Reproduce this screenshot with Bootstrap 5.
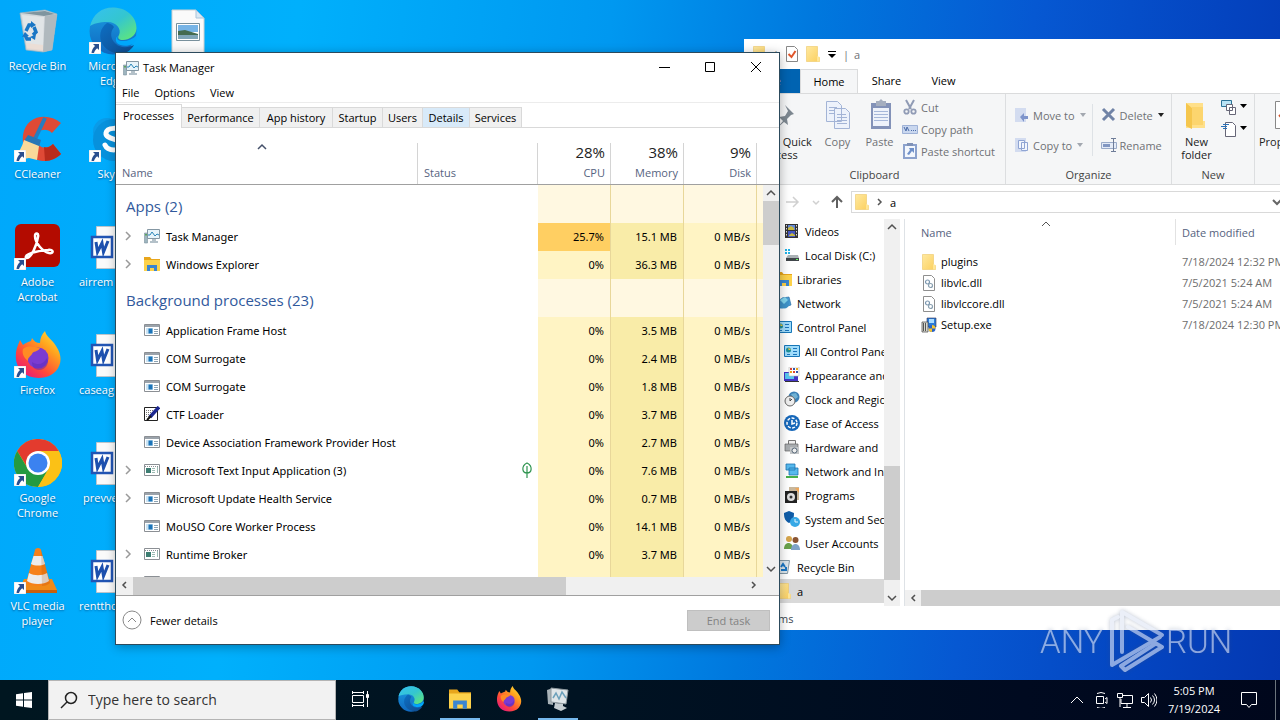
<!DOCTYPE html>
<html lang="en">
<head>
<meta charset="utf-8">
<meta name="viewport" content="width=device-width, initial-scale=1">
<title>Desktop</title>
<link href="https://cdn.jsdelivr.net/npm/bootstrap@5.3.0/dist/css/bootstrap.min.css" rel="stylesheet">
<script src="https://cdn.jsdelivr.net/npm/bootstrap@5.3.0/dist/js/bootstrap.bundle.min.js"></script>
<style>
body{font-family:"Open Sans","Noto Sans",sans-serif;font-size:11px;line-height:15px;color:#000}
button,input{font:inherit;color:inherit}
button{border:0;background:none;padding:0}
svg{flex:none;display:block}
.i16{width:16px;height:16px}
.desk{background:linear-gradient(97deg,#00a8fb 0%,#00b0fc 22%,#0098f0 45%,#0078de 60%,#0658d2 76%,#0444c0 90%,#0438b2 100%)}
/* desktop shortcuts */
.shortcuts{display:grid;grid-auto-flow:column;grid-template-rows:repeat(6,108px);grid-auto-columns:75px}
.shortcut{color:#fff;text-decoration:none;text-align:center;padding-top:7px;text-shadow:0 1px 2px rgba(0,40,90,.6)}
.shortcut .pic{position:relative;width:48px;height:48px;margin:0 auto 3px}
.shortcut .pic svg{width:48px;height:48px}
.shortcut .pic svg.link-mark{position:absolute;left:0;bottom:1px;width:12px;height:12px}
.cut-label{text-align:left;padding-left:4px}
/* windows */
.win{position:absolute;background:#fff}
.tm{left:116px;top:52px;width:664px;height:593px;border:1px solid #2c4a5c;border-left:0;z-index:2;box-shadow:-1px 0 0 #2c4a5c,0 2px 10px rgba(0,0,0,.3)}
.tm-title{height:29px;padding-left:7px}
.tm-title svg.ctl{width:46px;height:29px}
.tm-menu{height:22px;padding-left:6px;gap:15px;border-bottom:1px solid #ececec}
.tm-tabs{height:25px;border-bottom:1px solid #d9d9d9;padding-top:2px}
.tm-tabs button{height:20px;background:#f0f0f0;border:1px solid #d9d9d9;border-left:0;border-bottom:0}
.tm-tabs button.active{height:24px;width:66px;background:#fff;margin-bottom:-1px;padding-bottom:3px}
.tm-tabs button.hot{background:#d8eaf9}
.procs{width:647px;table-layout:fixed;border-collapse:separate;border-spacing:0}
.procs td,.procs th{padding:0 6px;font-weight:400;vertical-align:middle;white-space:nowrap}
.procs thead th{height:57px;border-bottom:1px solid #a0a0a0;color:#566380;vertical-align:bottom;padding-bottom:4px;background:linear-gradient(#d4d4d4,#d4d4d4) right bottom/1px 41px no-repeat}
.procs thead th:last-child{background:none}
.procs thead b{display:block;font-weight:400;font-size:15px;line-height:20px;color:#222;padding-bottom:3px}
.procs tbody td{height:28px;padding-bottom:2px;font-family:"Noto Sans","Open Sans",sans-serif}
.procs .num{text-align:right;background:#fff4c4;border-right:1px solid #e8d79a}
.procs .mem{background:#f9eca8}
.procs .hot{background:#ffcf62}
.procs .fill{background:#fff4c4}
.procs .group td{height:38px}
.procs .group .num,.procs .group .fill{background:#fff8e1}
.procs .group th{font-size:15px;color:#31599c;padding:4px 10px 0;height:38px}
.pname{display:flex;align-items:center;gap:6px}
.pname .chev{width:16px;height:16px}
.sb{background:#f0f0f0}
.sb-thumb{background:#cdcdcd}
.sb-end{margin-top:10px}
.tm-sbhead{height:57px;border-bottom:1px solid #a0a0a0}
.tm-foot{height:49px;flex:none;border-top:1px solid #a0a0a0;padding:0 9px 0 6px}
.tm-hscroll{height:18px;flex:none}
.end-btn{width:83px;height:21px;background:#ccc;border:1px solid #bfbfbf;color:#838383}
/* explorer */
.ex{left:744px;top:39px;width:720px;height:591px}
.ex-title{height:30px;padding-left:8px;gap:5px}
.ex-tabs{height:24px}
.ex-tabs button{width:57px;margin-bottom:-1px;padding-bottom:2px}
.ex-tabs .file{background:#0063b1;color:#fff;margin-bottom:0;width:56px}
.ex-tabs .active{background:#f5f6f7;border:1px solid #dadbdc;border-bottom:0;width:58px}
.ribbon{height:92px;background:#f5f6f7;border-top:1px solid #dadbdc;border-bottom:1px solid #dadbdc}
.rg{padding:2px 0 2px;border-right:1px solid #dcdee0}
.rg-label{color:#444}
.big{line-height:13px;display:flex;flex-direction:column;align-items:center;color:#222;padding-top:3px}
.big svg{width:32px;height:34px;margin-bottom:2px}
.small-btn{display:flex;align-items:center;gap:3px;height:22px}
.dim{color:#6f7175}
.addr{height:34px;padding-left:35px}
.addr-box{height:22px;border:1px solid #d9d9d9;padding-left:2px;gap:5px}
.nav-pane{width:140px;flex:none;overflow:hidden}
.nav-pane a{display:flex;align-items:center;gap:5px;height:24px;padding-left:32px;color:#000;text-decoration:none;white-space:nowrap}
.nav-pane a.lv2{padding-left:40px}
.nav-pane a.sel{background:#d9d9d9}
.files{table-layout:fixed;width:600px}
.files th{font-weight:400;color:#566380;height:32px;padding:6px 0 0;vertical-align:top}
.files th:first-child{background:linear-gradient(#e2e2e2,#e2e2e2) right top/1px 26px no-repeat}
.files .when{padding-left:6px}
.files td{height:21px;padding:0;white-space:nowrap}
.files td.when{color:#6d6d6d}
.sort{margin:-5px 0 0 88px}
.ex-status{height:24px;color:#3c4650;padding-left:12px}
/* taskbar */
.bar{height:40px;background:linear-gradient(90deg,#001620,#001322 45%,#000a20 80%,#00071c)}
.bar .search{width:288px;height:40px;background:#f2f2f2;border:1px solid #b4b4b4;padding-left:10px;gap:9px}
.bar .search input{border:0;background:none;outline:0;font-size:14px;line-height:20px;width:230px;padding:0}
.bar .search input::placeholder{color:#333;opacity:1}
.app{width:40px;height:40px;margin-right:9px;border-bottom:2px solid transparent;display:flex;align-items:center;justify-content:center}
.app.tview{margin-right:11px}
.app svg{width:26px;height:26px}
.app.on{border-color:#76b9ed}
.clock{width:66px;line-height:18px;color:#fff}
.anyrun{position:absolute;left:1034px;top:606px;width:200px;height:68px;z-index:3;opacity:.62;filter:drop-shadow(0 0 2px rgba(60,80,120,.55))}
</style>
</head>
<body>
<svg width="0" height="0" class="position-absolute" aria-hidden="true">
<defs>
<linearGradient id="gEdge" x1="0" y1="0" x2="1" y2="1"><stop offset="0" stop-color="#35c1f1"/><stop offset=".5" stop-color="#34c6cf"/><stop offset="1" stop-color="#66eb6e"/></linearGradient>
<linearGradient id="gEdge2" x1="0" y1="0" x2="1" y2="1"><stop offset="0" stop-color="#0c6fc4"/><stop offset="1" stop-color="#114a8b"/></linearGradient>
<linearGradient id="gEdge3" x1="0" y1="0" x2="0" y2="1"><stop offset="0" stop-color="#1b9de2"/><stop offset="1" stop-color="#0f68c0"/></linearGradient>
<linearGradient id="gFox" x1="1" y1="0" x2=".2" y2="1"><stop offset="0" stop-color="#ffec3e"/><stop offset=".35" stop-color="#ffa41e"/><stop offset=".7" stop-color="#ff4a38"/><stop offset="1" stop-color="#e5177f"/></linearGradient>
<linearGradient id="gFold" x1="0" y1="0" x2="1" y2="1"><stop offset="0" stop-color="#ffe9a0"/><stop offset="1" stop-color="#fbcf5d"/></linearGradient>
<symbol id="mark" viewBox="0 0 12 12"><path fill="#fff" stroke="#bbb" stroke-width=".4" d="M0 0h12v12H0z"/><path fill="#2a4f8f" d="M4 2h6v6L8.200 6.200C6.500 7.500 5.500 9 5 11H2.500C2.600 8.500 4 6 6 4z"/></symbol>
<symbol id="bin" viewBox="0 0 48 48"><path fill="#d0d6da" stroke="#9fb2bc" stroke-width=".7" d="M6 6l25-3 12 4-5 36-9 2-17-2z"/><path fill="#b0b9be" d="M31 9l12-2-5 36-9 2z"/><path fill="#7f959f" d="M8 6l23-2 10 3-11 2z"/><path fill="#eceff0" opacity=".6" d="M8 8l22 2-1 33-16-2z"/><path fill="#f1d9cb" opacity=".6" d="M12 36l17 2v6l-16-2z"/><path fill="none" stroke="#1976c5" stroke-width="3.500" d="M12 24l3-6h3M20 20l2 5-3 3M17 32h-4l-2-4"/><path fill="#1976c5" d="M17 14l5 4-5 3zM22 27l-1 6-5-3zM8 30l3-5 4 4z"/></symbol>
<symbol id="edge" viewBox="0 0 48 48"><circle cx="24" cy="24" r="23.500" fill="url(#gEdge3)"/><path fill="url(#gEdge)" d="M1 19C4 7 13 0 25 .500c14 .500 23 11 22.500 21C47 29 40 33 34 33c-4 0-6-2-4-5 3-6-3-13-11-13C10 15 4 17 1 19z"/><path fill="url(#gEdge2)" d="M18 16c-7 5-9 14-4 22 4 6 12 9 19 9 5-1 10-5 12-9-6 3-14 3-18-1-6-5-6-12-2-17-2-3-5-4-7-4z"/><path fill="#00a8fb" d="M29 29c-2 3 0 5 5 5 5 0 10-2 14-6 0 4-1 6-4 9-6 3-13 2-16-1-2-3-1-6 1-7z"/></symbol>
<symbol id="pic" viewBox="0 0 48 48"><path fill="#fafafa" stroke="#d0d0d0" d="M8 3h24l8 8v35H8z"/><path fill="#d8e8f4" stroke="#a9c4da" d="M32 3v8h8z"/><path fill="#fff" stroke="#78909c" d="M12.500 16.500h23v17h-23z"/><path fill="#77b4e6" d="M14 18h20v7H14z"/><path fill="#446b50" d="M14 24l7-1 13 4v2H14z"/><path fill="#7fa5b7" d="M14 28h20v4H14z"/></symbol>
<symbol id="cc" viewBox="0 0 48 48"><path fill="#df4a36" d="M47 8C34-3 12 0 9 20c-2 17 10 26 22 26 6 0 12-3 16-7l-8-10c-7 7-17 3-17-6 0-8 10-11 16-5z"/><path fill="#b82c1c" d="M31 46c6 0 12-3 16-7l-8-10c-3 3-6 4-9 3z"/><path stroke="#267dc0" stroke-width="4" d="M31 3L20 26"/><path fill="#2876b6" d="M14 20l13 5-2 7-15-6z"/><path fill="#f9d99a" d="M10 25l15 6-2 14-8-2-6 1-8-3c4-4 7-9 9-16z"/></symbol>
<symbol id="skype" viewBox="0 0 48 48"><circle cx="18" cy="17" r="14" fill="#0a9be8"/><circle cx="25" cy="25" r="21" fill="#0791dc"/><path fill="none" stroke="#fff" stroke-width="5" stroke-linecap="round" d="M33 17c-2-5-15-5-16 1-1 7 16 5 16 12 0 6-14 7-17 0"/></symbol>
<symbol id="acro" viewBox="0 0 48 48"><rect x="1" y="1" width="45" height="43" rx="6" fill="#b30b00"/><path fill="none" stroke="#fff" stroke-width="2.500" d="M12 35c-2-4 10-7 22-8 6-1 6 4 1 3-6-1-14-10-14-17 0-4 4-3 3 1-1 8-7 22-12 21z"/></symbol>
<symbol id="word" viewBox="0 0 48 48"><path fill="#fafafa" stroke="#bcc5cc" d="M7.500 3.500h24l7 8v34h-31z"/><path fill="#fff" stroke="#2255b4" stroke-width="2.500" d="M3 14h20v20H3z"/><path fill="none" stroke="#1d50ae" stroke-width="3" d="M7 19l1.500 10L13 20l1.500 9L19 18"/></symbol>
<symbol id="fox" viewBox="0 0 48 48"><path fill="url(#gFox)" d="M26 12c0-5 2-9 5-12 1 6 8 9 11 15 7 10 5 19 0 25-8 9-25 9-34 1C0 33 1 21 4 14l2-5 3 5c2-2 5-3 8-4l1-3c2 3 4 5 8 5z"/><circle cx="24" cy="27" r="10.500" fill="#7b3bd2"/><path fill="#ff8b24" d="M9 18c5-4 11-2 17-1-2 4-7 3-8 6-1 2-5 4-4 7-5-4-6-8-5-12z"/><path fill="#5a2cb5" d="M18 31c6 4 12 2 15-4 3 6-2 12-8 12-4 0-7-3-7-8z" opacity=".5"/></symbol>
<symbol id="chrome" viewBox="0 0 48 48"><circle cx="24" cy="24" r="24" fill="#fbc116"/><path fill="#e33b2e" d="M3.200 12A24 24 0 0 1 44.800 12H24L15 31z"/><path fill="#249a41" d="M3.200 12A24 24 0 0 0 24 48l10.500-18H14z"/><path fill="#fbc116" d="M24 12h20.800A24 24 0 0 1 24 48l10.500-18z"/><circle cx="24" cy="24" r="12" fill="#fff"/><circle cx="24" cy="24" r="9.500" fill="#3b82f0"/></symbol>
<symbol id="vlc" viewBox="0 0 48 48"><path fill="#f08a18" d="M10 32h28l5 11v3H5v-3z"/><path fill="#c8600c" d="M5 43h38v3H5z"/><path fill="#f6811a" d="M24 1c2 0 3 1 3 2l9 33c-4 4-20 4-24 0L21 3c0-1 1-2 3-2z"/><path fill="#ececec" d="M19.500 9h9l2.500 8c-4 2-10 2-14 0zM15 26c5 3 13 3 18 0l2 8c-5 4-17 4-22 0z"/><path fill="#a84a00" d="M27 3l9 33c-2 2-5 3-8 3z" opacity=".2"/></symbol>
<symbol id="tm" viewBox="0 0 16 16"><path fill="#9eb5bf" stroke="#7b929e" stroke-width=".6" d="M.500 5h3v10h-3z"/><path fill="#5aa65e" d="M1 6h2v1.500H1z"/><path fill="#e6f3fa" stroke="#8497a3" d="M3.500 1.500h12v9h-12z"/><path fill="none" stroke="#2a86b8" d="M4 7h2l2-3 3 4 2-2 2 1"/><path fill="#b4c1c9" d="M8 11h4v2h2v2H6v-2h2z"/></symbol>
<symbol id="explorer" viewBox="0 0 16 16"><path fill="#e8a61c" d="M0 1h6l1.500 2H16v3H0z"/><path fill="#fdd24b" d="M0 4h16v11H0z"/><path fill="#3a85d0" d="M3 9h10v6h-3v-3H6v3H3z"/></symbol>
<symbol id="exe" viewBox="0 0 16 16"><path fill="#fff" stroke="#8b8f94" d="M.500 2.500h15v11H.500z"/><path fill="#9ba3ab" d="M1 3h14v2H1z"/><path fill="#cbe4f4" d="M2 6h7v6H2z"/><path fill="#1c74b8" d="M4.500 6.500h4v5h-4z"/><path stroke="#8da4b4" d="M10 7.500h4M10 9.500h4M10 11.500h4"/></symbol>
<symbol id="uwp" viewBox="0 0 16 16"><path fill="#fff" stroke="#8b8f94" d="M.500 2.500h15v11H.500z"/><path stroke="#8b8f94" stroke-dasharray="1 1" d="M1 4.500h14"/><path fill="#3c7d72" d="M2 6h5v5H2z"/><path stroke="#9cbcb4" d="M8 6.500h3M8 8.500h3M8 10.500h3M13.500 5v6"/></symbol>
<symbol id="ctf" viewBox="0 0 16 16"><path fill="#fff" stroke="#222" d="M.500 1.500h13v13H.500z"/><path stroke="#777" stroke-dasharray="1 1" d="M2 4.500h9M2 6.500h8M2 8.500h5M2 10.500h4"/><path stroke="#1c2890" stroke-width="3.500" d="M15 1L6 11"/><path stroke="#111" stroke-width="2" d="M7 10l-4 4"/></symbol>
<symbol id="right" viewBox="0 0 16 16"><path fill="none" stroke="#9a9a9a" stroke-width="1.500" d="M4 4l4 4-4 4"/></symbol>
<symbol id="aU" viewBox="0 0 16 16"><path fill="none" stroke="#505050" stroke-width="1.500" d="M4 10l4-4 4 4"/></symbol>
<symbol id="aD" viewBox="0 0 16 16"><path fill="none" stroke="#505050" stroke-width="1.500" d="M4 6l4 4 4-4"/></symbol>
<symbol id="aL" viewBox="0 0 16 16"><path fill="none" stroke="#505050" stroke-width="1.500" d="M10 5L7 8l3 3"/></symbol>
<symbol id="aR" viewBox="0 0 16 16"><path fill="none" stroke="#505050" stroke-width="1.500" d="M5 5l3 3-3 3"/></symbol>
<symbol id="folder" viewBox="0 0 16 16"><path fill="url(#gFold)" stroke="#ecc768" stroke-width=".6" d="M1.500.500h11v11h2v4h-13z"/><path fill="#ffe697" d="M12 10l2.500 1v4.500H12z"/></symbol>
<symbol id="dll" viewBox="0 0 16 16"><path fill="#fff" stroke="#8f8f8f" d="M2.500.500h8l3 3v12h-11z"/><circle cx="6.500" cy="7" r="2" fill="none" stroke="#7c98b0" stroke-width="1.200"/><circle cx="9.500" cy="10.500" r="2" fill="none" stroke="#8aa0b0" stroke-width="1.200"/></symbol>
<symbol id="setup" viewBox="0 0 16 16"><path fill="#2b7bd8" stroke="#335" stroke-width=".6" d="M6 1h9v9H6z"/><path fill="#a9dcff" d="M8 2h5v4H8z"/><path fill="#d7d7cf" stroke="#444" stroke-width=".7" d="M1 5h6v10H1z"/><path stroke="#555" d="M2.500 6v8M4.500 6v8"/><circle cx="11" cy="11.500" r="3.500" fill="#2a62c4"/><path fill="#f4c430" d="M11 8v3.500h3.500A3.500 3.500 0 0 0 11 8zM11 11.500V15a3.500 3.500 0 0 1-3.500-3.500z"/></symbol>
<symbol id="video" viewBox="0 0 16 16"><path fill="#333" d="M1 1h13v14H1z"/><path fill="#648ad8" d="M4 2h7v5H4z"/><path fill="#4557c2" d="M4 8h7v6H4z"/><path fill="#c8b941" d="M4 5l3-2 3 2v2H4zM5 12l3-2 3 2v1H5z"/><path stroke="#ddd" stroke-dasharray="1.500 1.500" d="M2.500 2v12M12.500 2v12"/></symbol>
<symbol id="disk" viewBox="0 0 16 16"><path fill="#1fb3e8" d="M1 2h2v2H1zM4 2h2v2H4zM1 5h2v2H1zM4 5h2v2H4z"/><path fill="#aab1b5" d="M4 8h10l1 3H2z"/><path fill="#40464a" d="M2 11h13v3H2z"/><path fill="#6f6" d="M12 12h2v1h-2z"/></symbol>
<symbol id="net" viewBox="0 0 16 16"><path fill="#4b9fda" stroke="#2b6fa5" stroke-width=".7" d="M6 3l7-1 2 8-7 2z"/><circle cx="5" cy="9" r="4.500" fill="#2f86cf"/><circle cx="8" cy="8" r="5.500" fill="#3f93c9"/><path fill="#83d5ee" d="M4 5l5-3 3 3-4 4z"/></symbol>
<symbol id="cp" viewBox="0 0 16 16"><path fill="#9fdcfb" stroke="#1777b8" d="M.500 2.500h15v11H.500z"/><circle cx="4.500" cy="7" r="2.500" fill="#1e8f97"/><path fill="#f2c744" d="M4.500 7V4.500L7 7z"/><path stroke="#1b75bc" d="M9 5.500h4M9 8.500h4M3 11.500h3M9 11.500h4"/></symbol>
<symbol id="appear" viewBox="0 0 16 16"><path fill="#4334c5" d="M0 5h14v9H0z"/><path fill="#58c7ef" d="M1 6h9v6H1z"/><path fill="#fff" stroke="#bbb" stroke-width=".6" d="M5 0h10v9H5z"/><path fill="#d43" d="M6 1h2v2H6zM9 4h2v2H9z"/><path fill="#35a" d="M9 1h2v2H9zM12 4h2v2h-2z"/><path fill="#e9a51b" d="M12 1h2v2h-2zM6 4h2v2H6z"/><path fill="#333" d="M1 14h14v1H1z"/></symbol>
<symbol id="clk" viewBox="0 0 16 16"><circle cx="10" cy="6" r="5.500" fill="#3b80b6"/><path fill="#70b1d3" d="M7 3l5-1 2 4-4 3z"/><circle cx="6" cy="10" r="5" fill="#eee" stroke="#666"/><path fill="none" stroke="#444" d="M6 7v3l2-2"/></symbol>
<symbol id="ease" viewBox="0 0 16 16"><circle cx="8" cy="8" r="8" fill="#1667b9"/><circle cx="8" cy="8" r="5" fill="none" stroke="#fff" stroke-width="1.500" stroke-dasharray="3 1.500"/><path stroke="#fff" fill="none" stroke-width="1.500" d="M8 5v4l3-1"/></symbol>
<symbol id="hard" viewBox="0 0 16 16"><path fill="#eee" stroke="#777" d="M4.500 1.500h7v5h-7z"/><path fill="#a9adb0" stroke="#666" stroke-width=".7" d="M1 5h13v7H1z"/><path fill="#c3c6c8" d="M6 8h9v7H6z"/><circle cx="10.500" cy="11.500" r="2.500" fill="#eee" stroke="#567"/></symbol>
<symbol id="neti" viewBox="0 0 16 16"><path fill="#57b9ed" stroke="#1d75b2" stroke-width=".8" d="M2 1h9v6H2zM5 5h9v7H5z"/><path fill="#47b04b" d="M2 13h12v2H2z"/></symbol>
<symbol id="prog" viewBox="0 0 16 16"><path fill="#c9b79b" d="M5 0h10v13H5z"/><path fill="#f0a75a" d="M11 1h4v5z"/><path fill="#222" d="M1 4h12v12H1z"/><circle cx="7" cy="10" r="4" fill="#ddd"/><circle cx="7" cy="10" r="1.500" fill="#333"/></symbol>
<symbol id="sec" viewBox="0 0 16 16"><path fill="#105da8" d="M0 2l5-2 5 2c0 5-1 8-5 10C1 10 0 7 0 2z"/><circle cx="11" cy="11" r="5" fill="#38a9e6"/><path fill="none" stroke="#e5f5ff" d="M11 8v3h3"/></symbol>
<symbol id="users" viewBox="0 0 16 16"><circle cx="5" cy="4" r="3" fill="#d6a54c"/><path fill="#6aa24b" d="M0 14c0-8 9-8 9 0z"/><circle cx="11.500" cy="5" r="3" fill="#8a5432"/><path fill="#7fa3c7" d="M7 15c0-8 9-8 9 0z"/></symbol>
<symbol id="rbin" viewBox="0 0 16 16"><path fill="#dce6ec" stroke="#8297a5" d="M1.500 1.500h12l-2 13h-8z"/><path fill="none" stroke="#1976c5" stroke-width="2" d="M5 8l2-3 2 3M10 8l0 3H5"/></symbol>
<symbol id="win" viewBox="0 0 16 16"><path fill="#fff" d="M0 2.200L7 1.200v6.300H0zM8 1l8-1v7.500H8zM0 8.500h7v6.300l-7-1zM8 8.500h8V16l-8-1z"/></symbol>
</defs></svg>

<div class="d-flex flex-column vh-100 overflow-hidden">
<main class="desk flex-grow-1 position-relative overflow-hidden">
<nav class="shortcuts" aria-label="Desktop">
<a class="shortcut" href="#"><div class="pic"><svg><use href="#bin"/></svg></div>Recycle Bin</a>
<a class="shortcut" href="#"><div class="pic"><svg><use href="#cc"/></svg><svg class="link-mark"><use href="#mark"/></svg></div>CCleaner</a>
<a class="shortcut" href="#"><div class="pic"><svg><use href="#acro"/></svg><svg class="link-mark"><use href="#mark"/></svg></div>Adobe<br>Acrobat</a>
<a class="shortcut" href="#"><div class="pic"><svg><use href="#fox"/></svg><svg class="link-mark"><use href="#mark"/></svg></div>Firefox</a>
<a class="shortcut" href="#"><div class="pic"><svg><use href="#chrome"/></svg><svg class="link-mark"><use href="#mark"/></svg></div>Google<br>Chrome</a>
<a class="shortcut" href="#"><div class="pic"><svg><use href="#vlc"/></svg><svg class="link-mark"><use href="#mark"/></svg></div>VLC media<br>player</a>
<a class="shortcut" href="#"><div class="pic"><svg><use href="#edge"/></svg><svg class="link-mark"><use href="#mark"/></svg></div>Microsoft<br>Edge</a>
<a class="shortcut" href="#"><div class="pic"><svg><use href="#skype"/></svg><svg class="link-mark"><use href="#mark"/></svg></div>Skype</a>
<a class="shortcut" href="#"><div class="pic"><svg><use href="#word"/></svg></div><div class="cut-label">airrem</div></a>
<a class="shortcut" href="#"><div class="pic"><svg><use href="#word"/></svg></div><div class="cut-label">caseag</div></a>
<a class="shortcut" href="#"><div class="pic"><svg><use href="#word"/></svg></div><div class="cut-label ps-2">prevve</div></a>
<a class="shortcut" href="#"><div class="pic"><svg><use href="#word"/></svg></div><div class="cut-label">renttho</div></a>
<a class="shortcut" href="#" aria-label="Picture"><div class="pic"><svg><use href="#pic"/></svg></div></a>
</nav>

<!-- File Explorer -->
<section class="win ex d-flex flex-column" aria-label="File Explorer">
<div class="ex-title d-flex align-items-center">
<svg class="i16"><use href="#folder"/></svg><span class="dim">|</span>
<svg class="i16"><path fill="#fff" stroke="#888" d="M2.500.500h8l3 3v12h-11z"/><path fill="none" stroke="#e0562b" stroke-width="2" d="M4.500 8l3 3 4-6"/></svg>
<svg class="i16"><use href="#folder"/></svg>
<svg width="12" height="12"><path stroke="#000" d="M2 3.500h8"/><path d="M2 6h8l-4 4z"/></svg>
<span class="dim">|</span><span class="dim">a</span>
</div>
<div class="ex-tabs d-flex">
<button class="file">File</button><button class="active">Home</button><button>Share</button><button>View</button>
</div>
<div class="ribbon d-flex">
<div class="rg d-flex flex-column justify-content-between" style="width:262px">
<div class="d-flex">
<button class="big" style="width:74px"><svg viewBox="0 0 32 34"><path fill="#7d8790" d="M20 6l9 9-3 1-4 4 1 6-4-3-7 6 6-7-4-4 6-1 3-5z"/></svg>Pin to Quick<br>access</button>
<button class="big dim" style="width:39px"><svg viewBox="0 0 32 34"><path fill="#edf2fb" stroke="#a3b4d6" d="M4.500 2.500h11l4 4v16h-15zM12.500 9.500h11l4 4v16h-15z"/><path stroke="#a3b4d6" d="M7 8.500h8M7 11.500h5M7 14.500h5M15 15.500h9M15 18.500h10M15 21.500h10M15 24.500h10"/></svg>Copy</button>
<button class="big dim" style="width:45px"><svg viewBox="0 0 32 34"><path fill="#8392b8" d="M7 4h20v26H7z"/><path fill="#eef2fa" d="M9 9h16v18H9z"/><path fill="#a5aebf" d="M12 2h3l2-2 2 2h3v5H12z"/><path stroke="#a6b7d9" d="M10 12.500h14M10 15.500h14M10 18.500h14M10 21.500h14"/></svg>Paste</button>
<div class="dim">
<button class="small-btn"><svg class="i16" viewBox="0 0 16 16"><path fill="none" stroke="#909bb5" stroke-width="2" d="M4 1l5 9M12 1L7 10"/><circle cx="4.500" cy="12.500" r="2.200" fill="none" stroke="#909bb5" stroke-width="1.800"/><circle cx="11.500" cy="12.500" r="2.200" fill="none" stroke="#909bb5" stroke-width="1.800"/></svg>Cut</button>
<button class="small-btn"><svg class="i16" viewBox="0 0 16 16"><path fill="#c9d7ef" stroke="#9fb2d7" d="M.500 4.500h15v8H.500z"/><path fill="none" stroke="#4a6ba8" d="M2 6l2 4 1-4 2 4M9 9.500h1M11 9.500h1M13 9.500h1"/></svg>Copy path</button>
<button class="small-btn"><svg class="i16" viewBox="0 0 16 16"><path fill="#f3f7fd" stroke="#8ca2cd" stroke-width="2" d="M2 2h12v13H2z"/><path fill="#8092b7" d="M5 0h6v3H5z"/><path fill="#6f90c9" d="M7 5h5v5l-2-2-3 4-2-1 3-4z"/></svg>Paste shortcut</button>
</div></div>
<div class="rg-label text-center">Clipboard</div></div>
<div class="rg d-flex flex-column justify-content-between" style="width:166px">
<div class="d-flex dim pt-2 ps-2">
<div class="d-flex flex-column gap-2 pe-1 border-end">
<button class="small-btn"><svg class="i16" viewBox="0 0 16 16"><path fill="#d3dcf0" d="M1 1h11v14H1z"/><path fill="#7e94cb" d="M6 10l4-4v3h4v3h-4v3z"/></svg>Move to <svg width="10" height="8"><path fill="#a3a8b0" d="M2 2h6L5 6z"/></svg></button>
<button class="small-btn"><svg class="i16" viewBox="0 0 16 16"><path fill="#d3dcf0" d="M1 1h11v14H1z"/><path fill="#f2f6fd" stroke="#8fa4d3" d="M4.500 3.500h6v8h-6zM7.500 5.500h6v8h-6z"/></svg>Copy to <svg width="10" height="8"><path fill="#a3a8b0" d="M2 2h6L5 6z"/></svg></button></div>
<div class="d-flex flex-column gap-2 ps-2">
<button class="small-btn"><svg class="i16" viewBox="0 0 16 16"><path stroke="#7083a6" stroke-width="3" d="M2 2l11 11M13 2L2 13"/></svg>Delete <svg width="10" height="8"><path fill="#222" d="M2 2h6L5 6z"/></svg></button>
<button class="small-btn"><svg class="i16" viewBox="0 0 16 16"><path fill="#e4ebf7" stroke="#9aabc9" d="M.500 5.500h15v6H.500z"/><path fill="#8297c2" d="M2 7h7v3H2z"/><path fill="none" stroke="#6e7c98" d="M10 1.500h5M12.500 1v14M10 14.500h5"/></svg>Rename</button></div></div>
<div class="rg-label text-center">Organize</div></div>
<div class="rg d-flex flex-column justify-content-between" style="width:83px">
<div class="d-flex">
<button class="big" style="width:49px"><svg viewBox="0 0 32 34"><path fill="#ffe08a" d="M5 4h17v18h2v7H5z"/><path fill="#f5c64d" d="M5 4l6 5v21l-6-3z"/><path fill="#fbd063" d="M11 8h11v18H11z" opacity=".7"/></svg>New<br>folder</button>
<div>
<button class="small-btn"><svg class="i16" viewBox="0 0 16 16"><path fill="#b9e4f5" stroke="#2d7498" d="M.500 1.500h10v6H.500z"/><path fill="#fff" stroke="#667" d="M5.500 5.500h6v6h-6zM8.500 8.500h6v7h-6z"/></svg><svg width="8" height="8"><path d="M0 1h7L3.500 5z"/></svg></button>
<button class="small-btn"><svg class="i16" viewBox="0 0 16 16"><path fill="#fff" stroke="#667" d="M4.500 1.500h7l3 3v11h-10z"/><path stroke="#2b72b9" d="M2 3.500h6M0 5.500h6M2 7.500h4"/></svg><svg width="8" height="8"><path d="M0 1h7L3.500 5z"/></svg></button>
</div></div>
<div class="rg-label text-center">New</div></div>
<div class="rg ps-1"><button class="big"><svg viewBox="0 0 32 34"><path fill="#fff" stroke="#888" d="M5.500 2.500h20v27h-20z"/><path fill="none" stroke="#d5562d" stroke-width="2" d="M9 16l4 4 7-9"/></svg>Properties</button></div>
</div>
<div class="addr d-flex align-items-center">
<svg width="72" height="16"><path fill="none" stroke="#d0d0d0" stroke-width="1.500" d="M7 8h12M14 3l5 5-5 5M34 7l3 3 3-3" /><path fill="none" stroke="#606060" stroke-width="2" d="M58 14V3M53 8l5-5 5 5"/></svg>
<div class="addr-box d-flex align-items-center flex-grow-1"><svg class="i16"><use href="#folder"/></svg><svg width="10" height="10"><path fill="none" stroke="#555" stroke-width="1.500" d="M3 2l3 3-3 3"/></svg><span>a</span>
<svg width="12" height="12" style="margin-left:370px"><path fill="none" stroke="#666" stroke-width="2" d="M2 4l4 4 4-4"/></svg></div>
</div>
<div class="d-flex flex-grow-1 overflow-hidden">
<nav class="nav-pane" aria-label="Folders">
<a href="#" class="lv2"><svg class="i16"><use href="#video"/></svg>Videos</a>
<a href="#" class="lv2"><svg class="i16"><use href="#disk"/></svg>Local Disk (C:)</a>
<a href="#"><svg class="i16"><use href="#explorer"/></svg>Libraries</a>
<a href="#"><svg class="i16"><use href="#net"/></svg>Network</a>
<a href="#"><svg class="i16"><use href="#cp"/></svg>Control Panel</a>
<a href="#" class="lv2"><svg class="i16"><use href="#cp"/></svg>All Control Panel Items</a>
<a href="#" class="lv2"><svg class="i16"><use href="#appear"/></svg>Appearance and</a>
<a href="#" class="lv2"><svg class="i16"><use href="#clk"/></svg>Clock and Region</a>
<a href="#" class="lv2"><svg class="i16"><use href="#ease"/></svg>Ease of Access</a>
<a href="#" class="lv2"><svg class="i16"><use href="#hard"/></svg>Hardware and</a>
<a href="#" class="lv2"><svg class="i16"><use href="#neti"/></svg>Network and Internet</a>
<a href="#" class="lv2"><svg class="i16"><use href="#prog"/></svg>Programs</a>
<a href="#" class="lv2"><svg class="i16"><use href="#sec"/></svg>System and Security</a>
<a href="#" class="lv2"><svg class="i16"><use href="#users"/></svg>User Accounts</a>
<a href="#"><svg class="i16"><use href="#rbin"/></svg>Recycle Bin</a>
<a href="#" class="sel"><svg class="i16"><use href="#folder"/></svg>a</a>
</nav>
<div class="sb d-flex flex-column"><svg class="i16"><use href="#aU"/></svg><div class="flex-grow-1"></div><div class="sb-thumb" style="height:114px"></div><svg class="i16 sb-end"><use href="#aD"/></svg></div>
<div class="flex-grow-1 d-flex flex-column border-start ms-1 overflow-hidden">
<div class="flex-grow-1 ps-3">
<table class="files"><colgroup><col style="width:255px"><col></colgroup>
<thead><tr><th><span class="d-flex">Name<svg class="sort" width="12" height="8"><path fill="none" stroke="#555" d="M2 6l4-4 4 4"/></svg></span></th><th class="when">Date modified</th></tr></thead>
<tbody>
<tr><td><span class="d-flex gap-1"><svg class="i16"><use href="#folder"/></svg>plugins</span></td><td class="when">7/18/2024 12:32 PM</td></tr>
<tr><td><span class="d-flex gap-1"><svg class="i16"><use href="#dll"/></svg>libvlc.dll</span></td><td class="when">7/5/2021 5:24 AM</td></tr>
<tr><td><span class="d-flex gap-1"><svg class="i16"><use href="#dll"/></svg>libvlccore.dll</span></td><td class="when">7/5/2021 5:24 AM</td></tr>
<tr><td><span class="d-flex gap-1"><svg class="i16"><use href="#setup"/></svg>Setup.exe</span></td><td class="when">7/18/2024 12:30 PM</td></tr>
</tbody></table></div>
<div class="sb d-flex"><svg class="i16"><use href="#aL"/></svg><div class="sb-thumb flex-grow-1"></div></div>
</div></div>
<div class="ex-status d-flex align-items-center">4 items</div>
</section>

<!-- Task Manager -->
<section class="win tm d-flex flex-column" aria-label="Task Manager">
<div class="tm-title d-flex align-items-center"><svg class="i16 me-1"><use href="#tm"/></svg><span class="me-auto">Task Manager</span>
<button aria-label="Minimize"><svg class="ctl"><path stroke="#000" d="M18 14.500h11"/></svg></button><button aria-label="Maximize"><svg class="ctl"><path fill="none" stroke="#000" d="M18.500 9.500h9v9h-9z"/></svg></button><button aria-label="Close"><svg class="ctl"><path stroke="#000" d="M18 9l10 10M28 9L18 19"/></svg></button></div>
<div class="tm-menu d-flex align-items-center"><button>File</button><button>Options</button><button>View</button></div>
<div class="tm-tabs d-flex align-items-end" role="tablist">
<button class="active" role="tab">Processes</button><button role="tab" style="width:78px">Performance</button><button role="tab" style="width:73px">App history</button><button role="tab" style="width:50px">Startup</button><button role="tab" style="width:40px">Users</button><button class="hot" role="tab" style="width:47px">Details</button><button role="tab" style="width:52px">Services</button></div>
<div class="d-flex flex-grow-1 overflow-hidden">
<div class="overflow-hidden">
<table class="procs">
<colgroup><col style="width:302px"><col style="width:120px"><col style="width:73px"><col style="width:73px"><col style="width:73px"><col style="width:6px"></colgroup>
<thead><tr><th><span class="d-block" style="padding:0 0 14px 134px"><svg width="12" height="8"><path fill="none" stroke="#44506a" stroke-width="1.500" d="M2 6l4-4 4 4"/></svg></span>Name</th><th>Status</th><th class="text-end"><b>28%</b>CPU</th><th class="text-end"><b>38%</b>Memory</th><th class="text-end"><b>9%</b>Disk</th><th class="px-0"></th></tr></thead>
<tbody>
<tr class="group"><th colspan="2">Apps (2)</th><td class="num"></td><td class="num"></td><td class="num"></td><td class="fill px-0"></td></tr>
<tr><td colspan="2"><div class="pname"><svg class="chev"><use href="#right"/></svg><svg class="i16"><use href="#tm"/></svg>Task Manager</div></td><td class="num hot">25.7%</td><td class="num mem">15.1 MB</td><td class="num">0 MB/s</td><td class="fill px-0"></td></tr>
<tr><td colspan="2"><div class="pname"><svg class="chev"><use href="#right"/></svg><svg class="i16"><use href="#explorer"/></svg>Windows Explorer</div></td><td class="num">0%</td><td class="num mem">36.3 MB</td><td class="num">0 MB/s</td><td class="fill px-0"></td></tr>
<tr class="group"><th colspan="2">Background processes (23)</th><td class="num"></td><td class="num"></td><td class="num"></td><td class="fill px-0"></td></tr>
<tr><td colspan="2"><div class="pname"><span class="chev"></span><svg class="i16"><use href="#exe"/></svg>Application Frame Host</div></td><td class="num">0%</td><td class="num mem">3.5 MB</td><td class="num">0 MB/s</td><td class="fill px-0"></td></tr>
<tr><td colspan="2"><div class="pname"><span class="chev"></span><svg class="i16"><use href="#exe"/></svg>COM Surrogate</div></td><td class="num">0%</td><td class="num mem">2.4 MB</td><td class="num">0 MB/s</td><td class="fill px-0"></td></tr>
<tr><td colspan="2"><div class="pname"><span class="chev"></span><svg class="i16"><use href="#exe"/></svg>COM Surrogate</div></td><td class="num">0%</td><td class="num mem">1.8 MB</td><td class="num">0 MB/s</td><td class="fill px-0"></td></tr>
<tr><td colspan="2"><div class="pname"><span class="chev"></span><svg class="i16"><use href="#ctf"/></svg>CTF Loader</div></td><td class="num">0%</td><td class="num mem">3.7 MB</td><td class="num">0 MB/s</td><td class="fill px-0"></td></tr>
<tr><td colspan="2"><div class="pname"><span class="chev"></span><svg class="i16"><use href="#exe"/></svg>Device Association Framework Provider Host</div></td><td class="num">0%</td><td class="num mem">2.7 MB</td><td class="num">0 MB/s</td><td class="fill px-0"></td></tr>
<tr><td colspan="2"><div class="pname"><svg class="chev"><use href="#right"/></svg><svg class="i16"><use href="#uwp"/></svg>Microsoft Text Input Application (3)<svg width="10" height="16" class="ms-auto" viewBox="3 0 10 16"><path fill="none" stroke="#2f9450" stroke-width="1.200" d="M8 1C2 4 3 11 8 11s6-7 0-10zM8 4v12"/></svg></div></td><td class="num">0%</td><td class="num mem">7.6 MB</td><td class="num">0 MB/s</td><td class="fill px-0"></td></tr>
<tr><td colspan="2"><div class="pname"><svg class="chev"><use href="#right"/></svg><svg class="i16"><use href="#exe"/></svg>Microsoft Update Health Service</div></td><td class="num">0%</td><td class="num mem">0.7 MB</td><td class="num">0 MB/s</td><td class="fill px-0"></td></tr>
<tr><td colspan="2"><div class="pname"><span class="chev"></span><svg class="i16"><use href="#exe"/></svg>MoUSO Core Worker Process</div></td><td class="num">0%</td><td class="num mem">14.1 MB</td><td class="num">0 MB/s</td><td class="fill px-0"></td></tr>
<tr><td colspan="2"><div class="pname"><svg class="chev"><use href="#right"/></svg><svg class="i16"><use href="#uwp"/></svg>Runtime Broker</div></td><td class="num">0%</td><td class="num mem">3.7 MB</td><td class="num">0 MB/s</td><td class="fill px-0"></td></tr>
<tr><td colspan="2"><div class="pname"><span class="chev"></span><svg class="i16"><use href="#exe"/></svg></div></td><td class="num"></td><td class="num mem"></td><td class="num"></td><td class="fill px-0"></td></tr>
</tbody></table></div>
<div class="flex-grow-1 d-flex flex-column"><div class="tm-sbhead"></div><div class="sb flex-grow-1 d-flex flex-column"><svg class="i16"><use href="#aU"/></svg><div class="sb-thumb" style="height:44px"></div><svg class="i16 mt-auto"><use href="#aD"/></svg></div></div>
</div>
<div class="tm-hscroll sb d-flex align-items-stretch"><svg width="17" height="17"><use href="#aL" width="16" height="16"/></svg><div class="sb-thumb" style="width:433px"></div><svg class="i16 ms-auto me-3"><use href="#aR"/></svg></div>
<div class="tm-foot d-flex align-items-center justify-content-between"><button class="d-flex align-items-center"><svg width="20" height="20" class="me-2"><circle cx="10" cy="10" r="9" fill="none" stroke="#888"/><path fill="none" stroke="#888" d="M6 12l4-4 4 4"/></svg>Fewer details</button><button class="end-btn" disabled>End task</button></div>
</section>

<svg class="anyrun" viewBox="0 0 200 68" role="img" aria-label="ANY RUN"><g fill="#dfe6f5" font-family="Roboto,'Liberation Sans',sans-serif" font-weight="300" font-size="33"><text x="6" y="47">ANY</text><text x="132" y="47">RUN</text></g>
<g fill="none" stroke="#dfe6f5" stroke-width="4" stroke-linejoin="round" stroke-linecap="round"><path d="M88 46V6l40 23"/><path d="M84 11l-6 3v45l48-28"/><path d="M94 21l34 20-37 23-4-4 34-22"/></g></svg>
</main>

<footer class="bar d-flex align-items-center text-white">
<button class="d-flex justify-content-center" style="width:48px" aria-label="Start"><svg class="i16"><use href="#win"/></svg></button>
<div class="search d-flex align-items-center"><svg width="20" height="20"><circle cx="12" cy="8" r="5.500" fill="none" stroke="#222" stroke-width="1.500"/><path stroke="#222" stroke-width="1.500" d="M8 12l-6 6"/></svg><input type="text" placeholder="Type here to search" aria-label="Search" class="text-dark"></div>
<button class="app tview ms-1" aria-label="Task view"><svg viewBox="0 0 26 26" fill="none" stroke="#fff"><path d="M5.500 8V5M5.500 6.500h11M16.500 8V5M5.500 9.500h11v7h-11zM5.500 18v3M5.500 19.500h11M16.500 18v3M20.500 5v16"/><path fill="#fff" d="M19.500 8.500h2v3h-2z"/></svg></button>
<button class="app" aria-label="Edge"><svg><use href="#edge"/></svg></button>
<button class="app on" aria-label="File Explorer"><svg style="width:22px"><use href="#explorer"/></svg></button>
<button class="app" aria-label="Firefox"><svg><use href="#fox"/></svg></button>
<button class="app on" aria-label="Task Manager"><svg viewBox="0 0 26 26"><path fill="#a9b3b8" d="M2 4l6-2v17l-5-1z"/><path fill="#dfe5e8" stroke="#8d989e" d="M6 2l17 2-2 14-15-2z"/><path fill="none" stroke="#6ba0bb" stroke-width="1.500" d="M8 12l3-5 3 6 3-7 4 6"/><path fill="#c6ced2" d="M10 17l8 1v2l4 2-6 3-7-3z"/></svg></button>
<div class="d-flex align-items-center ms-auto gap-2">
<svg class="i16"><path fill="none" stroke="#fff" d="M2 11l6-6 6 6"/></svg>
<svg class="i16" fill="none" stroke="#fff"><path d="M4 1.500q4-2 8 0M4 15.500q4 2 8 0M3.500 4.500h7v7h-7zM12 7l2-1.500v6L12 10"/></svg>
<svg class="i16" fill="none" stroke="#fff"><path d="M5 3.500h10.500v8H4V7M10 12v3M6 15.500h8M.500 1.500h5v4h-5zM3 6v9"/></svg>
<svg class="i16" fill="none" stroke="#fff"><path d="M.500 5.500h3l4-4v13l-4-4h-3zM9.500 5.500q2 2.500 0 5M11.500 3.500q4 4.500 0 9M13.500 1.500q5 6.500 0 13"/></svg>
</div>
<time class="clock text-center ms-1">5:05 PM<br>7/19/2024</time>
<button class="mx-1 px-2" aria-label="Notifications"><svg width="20" height="18"><path fill="none" stroke="#fff" d="M2.500 1.500h15v12h-5l-2.500 3-2.500-3h-5z"/></svg></button>
<span class="border-start border-secondary align-self-stretch ms-1 pe-1"></span>
</footer>
</div>
</body>
</html>
